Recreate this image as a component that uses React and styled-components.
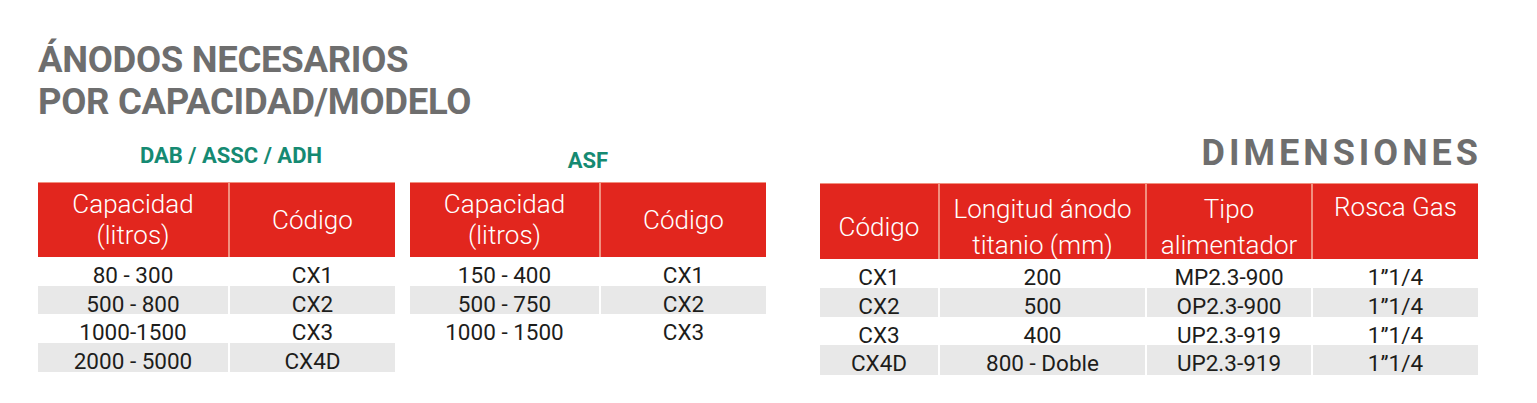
import React from "react"
import styled, { createGlobalStyle } from "styled-components"

const Global = createGlobalStyle`
    body{
        margin:0;
        background:#fff;
        font-family: Roboto, "Liberation Sans", sans-serif;
    }
`
const Page = styled.div`
    padding: 39px 0 0 38px;
    width: 1537px;
    height: 403px;
    box-sizing: border-box;
`
const Title = styled.h1`
    margin:0;
    font-size:36.5px;
    line-height:42px;
    font-weight:700;
    color:#6e6e6e;
    letter-spacing:-0.3px;
`
const Row = styled.div`
    display:flex;
    align-items:flex-start;
    gap:15px;
`
const Group = styled.div`
    display:flex;
    flex-direction:column;
    width:${p => p.$width}px;
    margin-left:${p => p.$offset || 0}px;
`
const Caption = styled.div`
    height:${p => p.$height}px;
    display:flex;
    align-items:flex-end;
    justify-content:${p => p.$align || "center"};
    padding:0 0 ${p => p.$bottom}px ${p => p.$left || 0}px;
    box-sizing:border-box;
    font-size:22px;
    line-height:26px;
    font-weight:700;
    color:#158a72;
`
const BigCaption = styled(Caption)`
    font-size:36px;
    line-height:42px;
    color:#6e6e6e;
    letter-spacing:4px;
    margin-right:-4px;
`
const HeadRow = styled.div`
    display:grid;
    grid-template-columns:${p => p.$cols};
    column-gap:2px;
    height:${p => p.$height}px;
    padding-top:1px;
    box-sizing:border-box;
    background:#f1907f;
`
const HeadCell = styled.div`
    background:#e2261e;
    color:#fff;
    display:flex;
    flex-direction:column;
    align-items:center;
    justify-content:${p => p.$top ? "flex-start" : "center"};
    padding-top:${p => p.$pad}px;
    box-sizing:border-box;
    text-align:center;
    font-size:26px;
    font-weight:300;
    line-height:${p => p.$lh}px;
`
const BodyRow = styled.div`
    display:grid;
    grid-template-columns:${p => p.$cols};
    column-gap:2px;
    height:${p => p.$height}px;
`
const BodyCell = styled.div`
    background:${p => p.$shade ? "#e8e8e8" : "#fff"};
    color:#1d1d1b;
    text-align:center;
    font-size:22.5px;
    font-weight:400;
    line-height:1;
    padding-top:7px;
    box-sizing:border-box;
    white-space:nowrap;
`

function DataTable({cols, headHeight, rowHeight, lh, pad, head, rows}){
    return(
        <div>
            <HeadRow $cols={cols} $height={headHeight}>
                {head.map((h, i) => (
                    <HeadCell key={i} $lh={lh} $pad={h.top ? 5 : pad} $top={h.top}>
                        {h.lines.map((l, j) => <span key={j}>{l}</span>)}
                    </HeadCell>
                ))}
            </HeadRow>
            {rows.map((r, i) => (
                <BodyRow key={i} $cols={cols} $height={rowHeight}>
                    {r.map((c, j) => <BodyCell key={j} $shade={i % 2 === 1}>{c}</BodyCell>)}
                </BodyRow>
            ))}
        </div>
    )
}

const capHead = [
    { lines: ["Capacidad", "(litros)"] },
    { lines: ["Código"] },
]

const dimHead = [
    { lines: ["Código"] },
    { lines: ["Longitud ánodo", "titanio (mm)"] },
    { lines: ["Tipo", "alimentador"] },
    { lines: ["Rosca Gas"], top: true },
]

const rosca = "1\u201D1/4"

export default function App(){
    return(
        <Page>
            <Global />
            <Title>ÁNODOS NECESARIOS<br />POR CAPACIDAD/MODELO</Title>
            <Row>
                <Group $width={357}>
                    <Caption $height={59} $bottom={13} $left={29}>DAB / ASSC / ADH</Caption>
                    <DataTable
                        cols="190px 165px" headHeight={75} rowHeight={28.5} lh={31} pad={0}
                        head={capHead}
                        rows={[
                            ["80 - 300", "CX1"],
                            ["500 - 800", "CX2"],
                            ["1000-1500", "CX3"],
                            ["2000 - 5000", "CX4D"],
                        ]}
                    />
                </Group>
                <Group $width={356}>
                    <Caption $height={59} $bottom={8}>ASF</Caption>
                    <DataTable
                        cols="189px 165px" headHeight={75} rowHeight={28.5} lh={31} pad={0}
                        head={capHead}
                        rows={[
                            ["150 - 400", "CX1"],
                            ["500 - 750", "CX2"],
                            ["1000 - 1500", "CX3"],
                        ]}
                    />
                </Group>
                <Group $width={658} $offset={39}>
                    <BigCaption $height={60} $bottom={9} $align="flex-end">DIMENSIONES</BigCaption>
                    <DataTable
                        cols="118px 205px 164px 165px" headHeight={76} rowHeight={28.75} lh={36} pad={7}
                        head={dimHead}
                        rows={[
                            ["CX1", "200", "MP2.3-900", rosca],
                            ["CX2", "500", "OP2.3-900", rosca],
                            ["CX3", "400", "UP2.3-919", rosca],
                            ["CX4D", "800 - Doble", "UP2.3-919", rosca],
                        ]}
                    />
                </Group>
            </Row>
        </Page>
    )
}
